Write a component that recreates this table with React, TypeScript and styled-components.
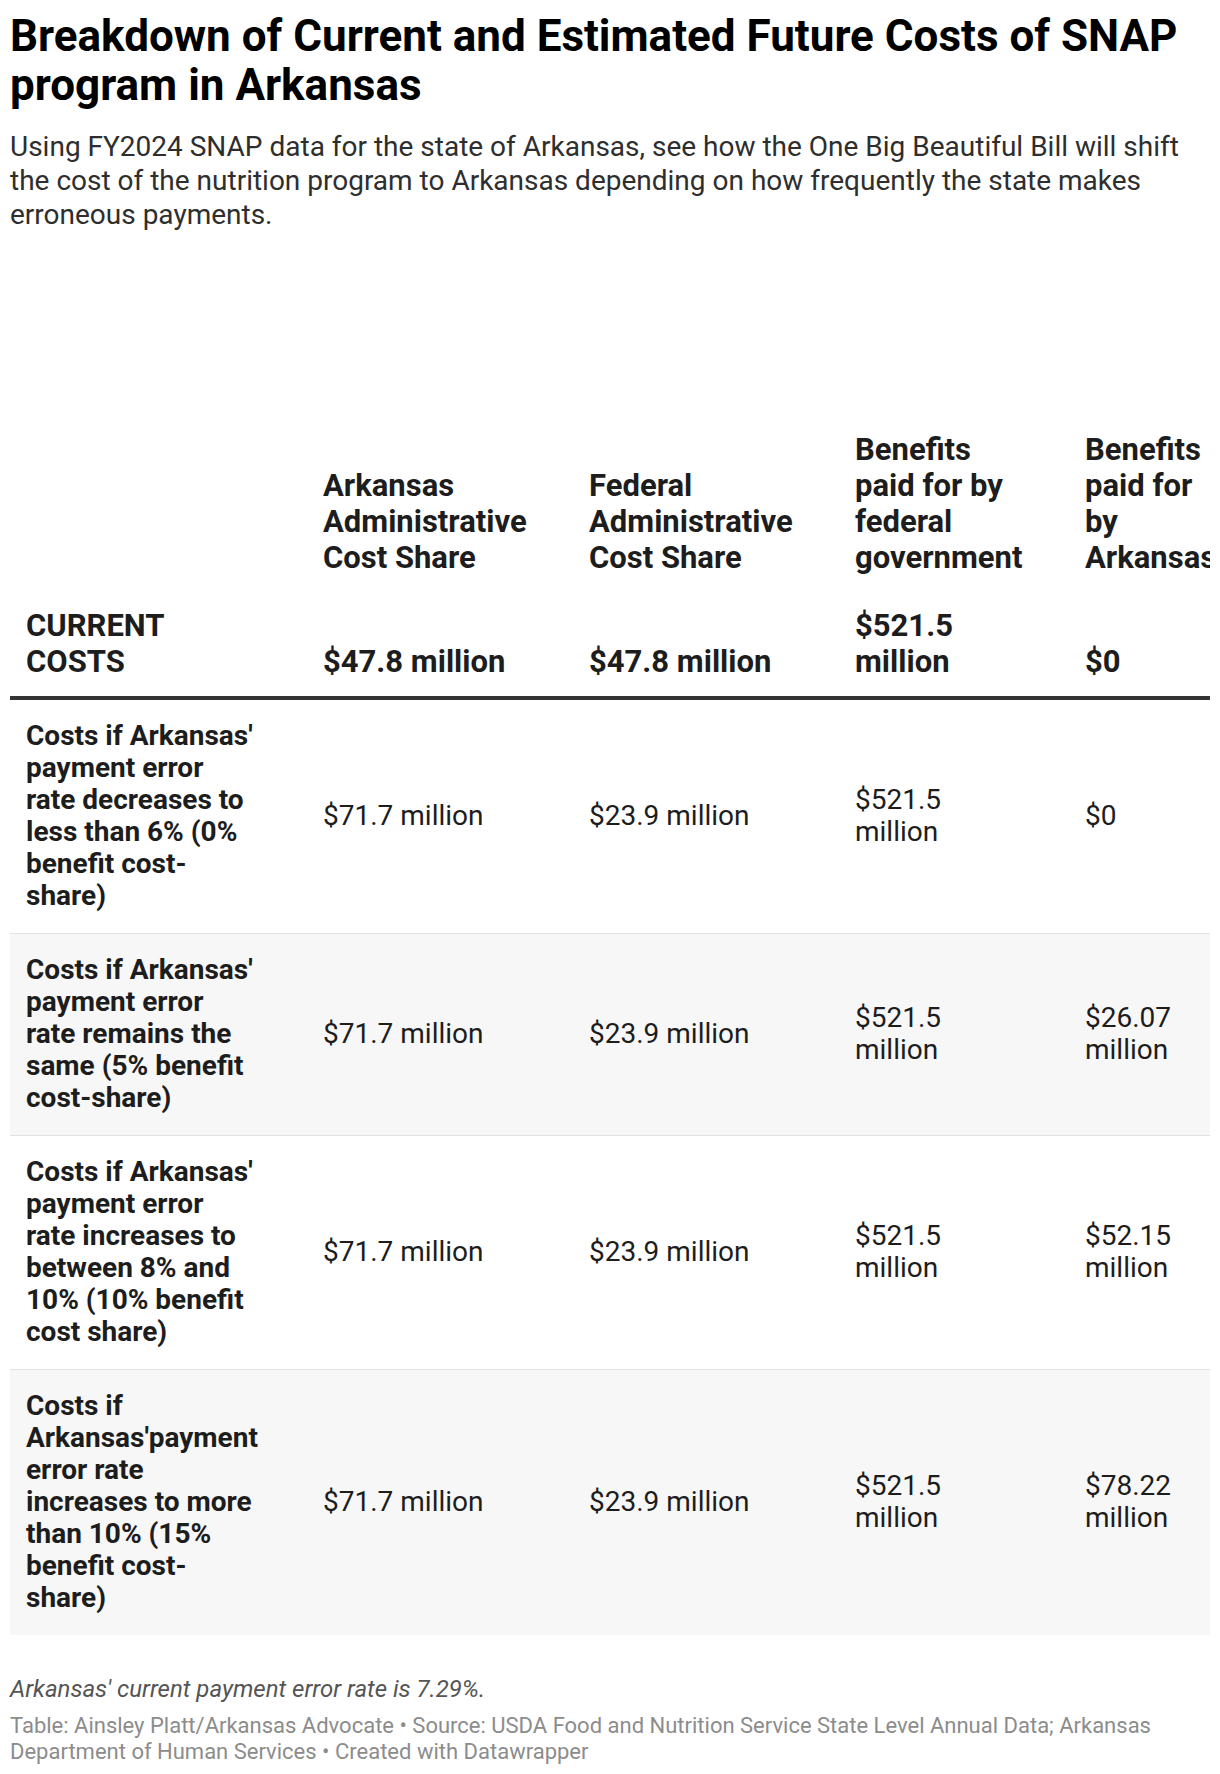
import React from "react";
import styled, { createGlobalStyle } from "styled-components";

const GlobalStyle = createGlobalStyle`
  html, body {
    margin: 0;
    padding: 0;
    background: #ffffff;
  }
  body {
    font-family: Roboto, "Liberation Sans", Arial, sans-serif;
    color: #1d1d1d;
  }
`;

const Page = styled.div`
  width: 1200px;
  padding: 12px 10px 10px 10px;
`;

const Title = styled.h1`
  margin: 0 0 21px 0;
  font-size: 44px;
  line-height: 48.5px;
  font-weight: 700;
  color: #000000;
`;

const Description = styled.p`
  margin: 0;
  font-size: 28px;
  line-height: 34px;
  font-weight: 400;
  color: #2e2e2e;
`;

const TableWrap = styled.div`
  margin-top: 200px;
  width: 1200px;
  overflow: hidden;
`;

type ColSpec = { width: number; content: number };

const COLS: ColSpec[] = [
  { width: 297, content: 228 },
  { width: 266, content: 250 },
  { width: 266, content: 250 },
  { width: 230, content: 170 },
  { width: 180, content: 130 },
];

const Row = styled.div<{ $variant: "head" | "current" | "body"; $shade?: boolean; $last?: boolean }>`
  display: grid;
  grid-template-columns: ${COLS.map((c) => `${c.width}px`).join(" ")};
  align-items: ${(p) => (p.$variant === "body" ? "center" : "end")};
  background: ${(p) => (p.$shade ? "#f7f7f7" : "#ffffff")};
  border-bottom: ${(p) =>
    p.$variant === "current"
      ? "4px solid #333333"
      : p.$variant === "body" && !p.$last
      ? "1px solid #e2e2e2"
      : "none"};
  padding: ${(p) =>
    p.$variant === "head" ? "0 0 16px 0" : p.$variant === "current" ? "16px 0" : "20px 0 21px 0"};
  font-size: ${(p) => (p.$variant === "body" ? "28px" : "31px")};
  line-height: ${(p) => (p.$variant === "body" ? "32px" : "36px")};
  font-weight: ${(p) => (p.$variant === "body" ? 400 : 700)};
  color: #1d1d1d;
`;

const Cell = styled.div<{ $col: number; $bold?: boolean }>`
  box-sizing: border-box;
  padding-left: 16px;
  padding-right: ${(p) => COLS[p.$col].width - 16 - COLS[p.$col].content}px;
  font-weight: ${(p) => (p.$bold ? 700 : "inherit")};
  overflow-wrap: normal;
`;

const Note = styled.p`
  margin: 39px 0 0 0;
  font-size: 24px;
  line-height: 30px;
  font-style: italic;
  color: #555555;
`;

const Footer = styled.p`
  margin: 9px 0 0 0;
  font-size: 22px;
  line-height: 26px;
  color: #8c8c8c;
`;

const headers = [
  "",
  "Arkansas Administrative Cost Share",
  "Federal Administrative Cost Share",
  "Benefits paid for by federal government",
  "Benefits paid for by Arkansas",
];

const current = ["CURRENT COSTS", "$47.8 million", "$47.8 million", "$521.5 million", "$0"];

const rows: string[][] = [
  [
    "Costs if Arkansas' payment error rate decreases to less than 6% (0% benefit cost-share)",
    "$71.7 million",
    "$23.9 million",
    "$521.5 million",
    "$0",
  ],
  [
    "Costs if Arkansas' payment error rate remains the same (5% benefit cost-share)",
    "$71.7 million",
    "$23.9 million",
    "$521.5 million",
    "$26.07 million",
  ],
  [
    "Costs if Arkansas' payment error rate increases to between 8% and 10% (10% benefit cost share)",
    "$71.7 million",
    "$23.9 million",
    "$521.5 million",
    "$52.15 million",
  ],
  [
    "Costs if Arkansas'payment error rate increases to more than 10% (15% benefit cost-share)",
    "$71.7 million",
    "$23.9 million",
    "$521.5 million",
    "$78.22 million",
  ],
];

export default function App() {
  return (
    <>
      <GlobalStyle />
      <Page>
        <Title>Breakdown of Current and Estimated Future Costs of SNAP program in Arkansas</Title>
        <Description>
          Using FY2024 SNAP data for the state of Arkansas, see how the One Big Beautiful Bill will
          shift the cost of the nutrition program to Arkansas depending on how frequently the state
          makes erroneous payments.
        </Description>
        <TableWrap>
          <Row $variant="head">
            {headers.map((h, i) => (
              <Cell key={i} $col={i}>
                {h}
              </Cell>
            ))}
          </Row>
          <Row $variant="current">
            {current.map((c, i) => (
              <Cell key={i} $col={i}>
                {c}
              </Cell>
            ))}
          </Row>
          {rows.map((r, ri) => (
            <Row key={ri} $variant="body" $shade={ri % 2 === 1} $last={ri === rows.length - 1}>
              {r.map((c, i) => (
                <Cell key={i} $col={i} $bold={i === 0}>
                  {c}
                </Cell>
              ))}
            </Row>
          ))}
        </TableWrap>
        <Note>Arkansas' current payment error rate is 7.29%.</Note>
        <Footer>
          Table: Ainsley Platt/Arkansas Advocate • Source: USDA Food and Nutrition Service State
          Level Annual Data; Arkansas Department of Human Services • Created with Datawrapper
        </Footer>
      </Page>
    </>
  );
}
